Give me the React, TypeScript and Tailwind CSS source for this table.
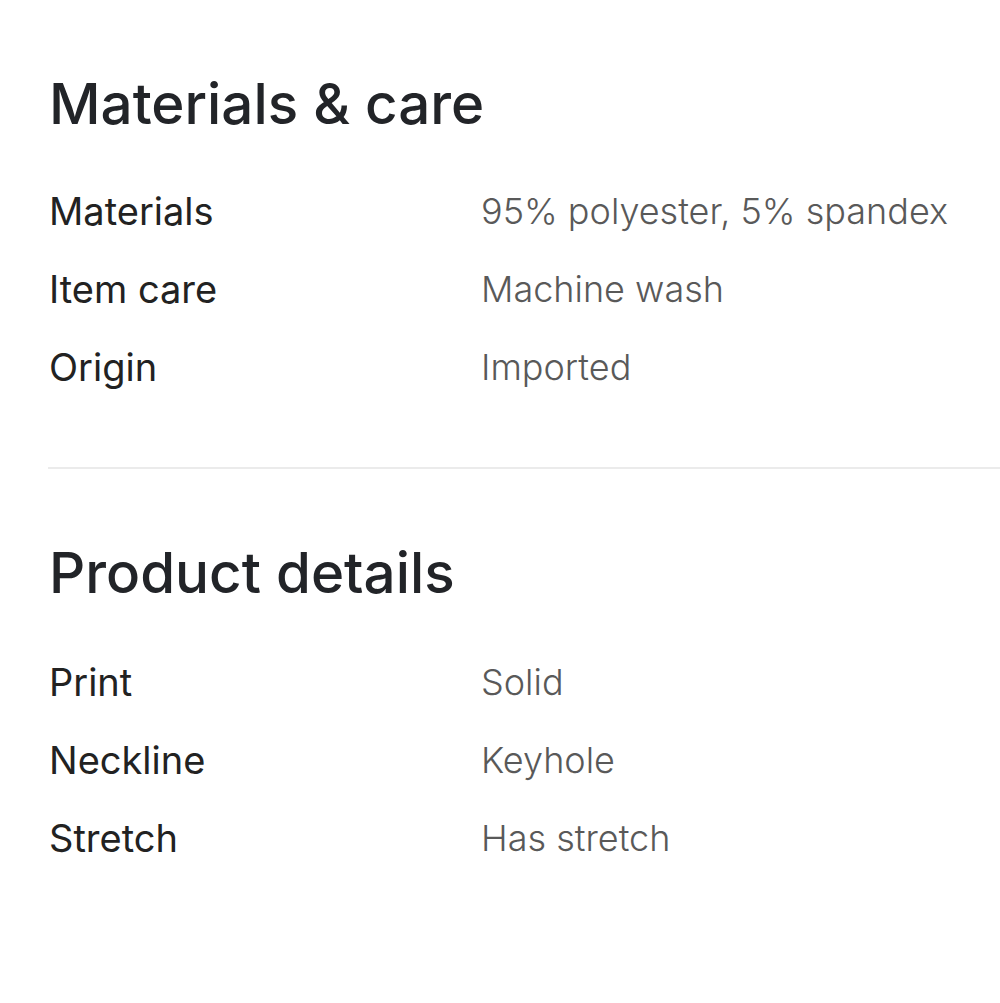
export default function App() {
  const font = { fontFamily: "Inter, 'Noto Sans', sans-serif" };
  const Row = ({ label, value }: { label: string; value: string }) => (
    <div className="flex h-[78px] items-center">
      <div className="w-[432px] text-[38px] font-normal text-[#222222]">{label}</div>
      <div className="text-[36px] font-light text-[#595959]">{value}</div>
    </div>
  );
  return (
    <div className="w-[1000px] h-[1003px] bg-white overflow-hidden" style={font}>
      <div className="pl-[49px] pt-[72px]">
        <h2 className="text-[56.5px] leading-[64px] font-medium text-[#222428]">Materials &amp; care</h2>
        <div className="mt-[36px]">
          <Row label="Materials" value="95% polyester, 5% spandex" />
          <Row label="Item care" value="Machine wash" />
          <Row label="Origin" value="Imported" />
        </div>
      </div>
      <div className="ml-[48px] mt-[61px] h-[2px] bg-[#ebebeb]" />
      <div className="pl-[49px] pt-[72px]">
        <h2 className="text-[56.5px] leading-[64px] font-medium text-[#222428]">Product details</h2>
        <div className="mt-[38px]">
          <Row label="Print" value="Solid" />
          <Row label="Neckline" value="Keyhole" />
          <Row label="Stretch" value="Has stretch" />
        </div>
      </div>
    </div>
  );
}
